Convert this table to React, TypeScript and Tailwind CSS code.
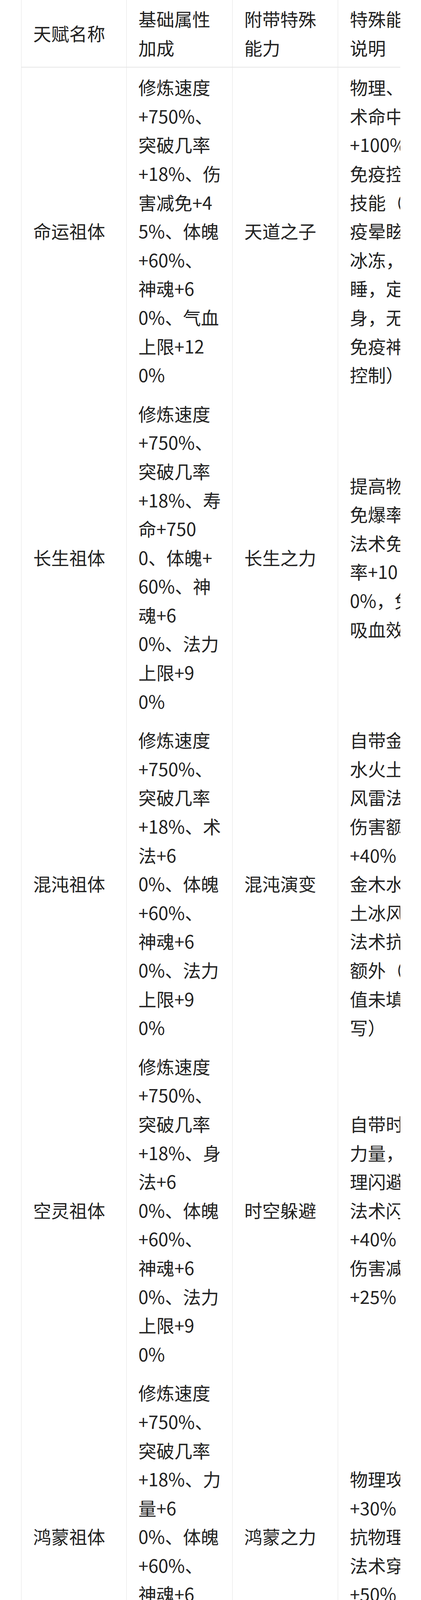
type Row = {
  name: string[];
  base: string[];
  ability: string[];
  desc: string[];
};

// lines are kept as in the source table (it wraps with break-all)
const header: Row = {
  name: ['天赋名称'],
  base: ['基础属性', '加成'],
  ability: ['附带特殊', '能力'],
  desc: ['特殊能力', '说明'],
};

const rows: Row[] = [
  {
    name: ['命运祖体'],
    base: ['修炼速度', '+750%、', '突破几率', '+18%、伤', '害减免+4', '5%、体魄', '+60%、', '神魂+6', '0%、气血', '上限+12', '0%'],
    ability: ['天道之子'],
    desc: ['物理、法', '术命中', '+100%，', '免疫控制', '技能（免', '疫晕眩、', '冰冻，昏', '睡，定', '身，无视', '免疫神识', '控制）'],
  },
  {
    name: ['长生祖体'],
    base: ['修炼速度', '+750%、', '突破几率', '+18%、寿', '命+750', '0、体魄+', '60%、神', '魂+6', '0%、法力', '上限+9', '0%'],
    ability: ['长生之力'],
    desc: ['提高物理', '免爆率、', '法术免爆', '率+10', '0%，免疫', '吸血效果'],
  },
  {
    name: ['混沌祖体'],
    base: ['修炼速度', '+750%、', '突破几率', '+18%、术', '法+6', '0%、体魄', '+60%、', '神魂+6', '0%、法力', '上限+9', '0%'],
    ability: ['混沌演变'],
    desc: ['自带金木', '水火土', '风雷法术', '伤害额外', '+40%', '金木水火', '土冰风雷', '法术抗性', '额外（数', '值未填', '写）'],
  },
  {
    name: ['空灵祖体'],
    base: ['修炼速度', '+750%、', '突破几率', '+18%、身', '法+6', '0%、体魄', '+60%、', '神魂+6', '0%、法力', '上限+9', '0%'],
    ability: ['时空躲避'],
    desc: ['自带时空', '力量，物', '理闪避、', '法术闪避', '+40%', '伤害减免', '+25%'],
  },
  {
    name: ['鸿蒙祖体'],
    base: ['修炼速度', '+750%、', '突破几率', '+18%、力', '量+6', '0%、体魄', '+60%、', '神魂+6', '0%、气血', '上限+12', '0%'],
    ability: ['鸿蒙之力'],
    desc: ['物理攻击', '+30%', '抗物理、', '法术穿透', '+50%'],
  },
  {
    name: ['道源祖体'],
    base: ['修炼速度', '+750%、', '突破几率', '+18%、术', '法+6', '0%、体魄', '+60%、', '神魂+6', '0%、法力', '上限+9', '0%'],
    ability: ['道源仙气'],
    desc: ['法术攻击', '+30%', '丹毒消化', '速度+3', '0%'],
  },
  {
    name: ['太古剑祖', '体'],
    base: ['修炼速度', '+750%、', '突破几率', '+18%、剑', '道+150、', '体魄+6', '0%、神魂', '+60%、', '法力上限', '+90%'],
    ability: ['太古神剑'],
    desc: ['每次攻击', '都有较大', '几率触发', '最大物理', '攻击，暴', '击伤害+5', '0%'],
  },
  {
    name: ['太古道祖', '体'],
    base: ['修炼速度', '+750%、', '突破几率', '+18%、最', '大法术攻', '击+7', '5%、体魄', '+60%、', '神魂+6', '0%、法力', '上限+9', '0%'],
    ability: ['太古仙法'],
    desc: ['每次攻击', '都有较大', '几率触发', '最大法术', '攻击，术', '法+50%'],
  },
];

function Cell({ lines, width }: { lines: string[]; width: string }) {
  return (
    <div className={`${width} shrink-0 border-l border-[#e3e3e3] pl-[30px] pr-[30px] py-[13px] flex flex-col justify-center`}>
      {lines.map((line, i) => (
        <div key={i} className="whitespace-nowrap">
          {line}
        </div>
      ))}
    </div>
  );
}

function TableRow({ row, head }: { row: Row; head?: boolean }) {
  return (
    <div className={head ? 'flex border-b-2 border-[#e6e6e6]' : 'flex'}>
      <Cell lines={row.name} width="w-[269px]" />
      <Cell lines={row.base} width="w-[271px]" />
      <Cell lines={row.ability} width="w-[270px]" />
      <Cell lines={row.desc} width="w-[270px]" />
    </div>
  );
}

export default function App() {
  return (
    <div className="w-[1077px] h-[6836px] overflow-hidden bg-white text-[#222] text-[46px] leading-[1.6] font-['Noto_Sans_CJK_SC','Noto_Sans',sans-serif]">
      <div className="ml-[54px] w-[970px] overflow-hidden -mt-[2px]">
        <div className="w-[1080px]">
          <TableRow row={header} head />
          {rows.map((row, i) => (
            <TableRow key={i} row={row} />
          ))}
        </div>
      </div>
    </div>
  );
}
